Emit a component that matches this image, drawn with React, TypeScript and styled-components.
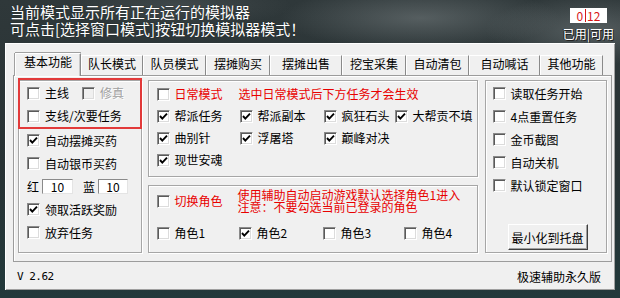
import React from "react";
import styled, { createGlobalStyle } from "styled-components";

const FONT = `"Noto Sans CJK SC", "Noto Sans", sans-serif`;

const GlobalStyle = createGlobalStyle`
  html, body { margin: 0; padding: 0; }
  body { width: 620px; height: 298px; overflow: hidden; background: #2a3335; }
  * { box-sizing: border-box; }
`;

const Window = styled.div`
  width: 620px;
  height: 298px;
  display: flex;
  flex-direction: column;
  font-family: ${FONT};
  background:
    radial-gradient(ellipse 200px 45px at 420px 18px, rgba(118, 126, 128, 0.55), transparent 70%),
    radial-gradient(ellipse 150px 50px at 590px 30px, rgba(112, 120, 122, 0.6), transparent 70%),
    radial-gradient(ellipse 160px 30px at 180px 6px, rgba(80, 88, 90, 0.5), transparent 70%),
    linear-gradient(180deg, #2f383a 0%, #283234 55%, #22393b 100%);
`;

const Header = styled.header`
  height: 43px;
  flex: none;
  display: flex;
  justify-content: space-between;
  align-items: flex-start;
  padding: 3px 6px 0 10px;
`;

const HeaderText = styled.div`
  color: #ffffff;
  font-size: 15px;
  line-height: 17px;
  text-shadow: 0 0 1px rgba(0, 0, 0, 0.6);
  white-space: nowrap;
`;

const Counter = styled.div`
  display: flex;
  flex-direction: column;
  align-items: center;
`;

const CounterBox = styled.div`
  margin-top: 5px;
  width: 37px;
  height: 15px;
  background: #ffffff;
  color: #d81818;
  font-size: 12px;
  line-height: 15px;
  display: flex;
  align-items: center;
  justify-content: center;
`;

const CounterBar = styled.span`
  display: inline-block;
  width: 1px;
  height: 13px;
  margin: 0 1px 0 2px;
  background: #d81818;
`;

const CounterLabel = styled.div`
  margin-top: 4px;
  color: #ffffff;
  font-size: 12px;
  line-height: 13px;
  text-shadow: 1px 1px 0 #222, -1px 0 0 #222;
  white-space: nowrap;
`;

const Panel = styled.main`
  margin: 0 5px;
  height: 247px;
  flex: none;
  background: #f0f0f0;
  padding: 10px 3px 0 8px;
  box-shadow: inset 1px 1px 0 #ffffff, inset -1px -1px 0 #a0a0a0;
  display: flex;
  flex-direction: column;
`;

const TabRow = styled.div`
  height: 22px;
  display: flex;
  align-items: flex-end;
  padding-left: 2px;
`;

const Tab = styled.div<{ $active?: boolean; $w: number }>`
  position: relative;
  z-index: ${(p) => (p.$active ? 1 : 0)};
  width: ${(p) => p.$w}px;
  height: ${(p) => (p.$active ? 23 : 20)}px;
  margin-bottom: ${(p) => (p.$active ? -1 : 0)}px;
  background: #f0f0f0;
  border-top: 1px solid ${(p) => (p.$active ? "#ffffff" : "#ffffff")};
  border-left: 1px solid #ffffff;
  border-right: 1px solid #8a8a8a;
  box-shadow: ${(p) => (p.$active ? "inset -1px 0 0 #c8c8c8, -1px 0 0 #a0a0a0, 0 -1px 0 #a0a0a0" : "none")};
  font-size: 12px;
  line-height: 15px;
  color: #000;
  text-align: center;
  white-space: nowrap;
`;

const Pane = styled.section`
  height: 187px;
  border: 1px solid #9c9c9c;
  box-shadow: inset 1px 1px 0 #ffffff;
  padding: 4px 4px 8px 4px;
  display: flex;
  gap: 6px;
`;

const Group = styled.div<{ $w: number; $h?: number }>`
  width: ${(p) => p.$w}px;
  ${(p) => (p.$h ? `height: ${p.$h}px;` : "flex: 1;")}
  border: 1px solid #a6a6a6;
  box-shadow: inset 1px 1px 0 #ffffff, 1px 1px 0 #ffffff;
  display: flex;
  flex-direction: column;
`;

const LeftGroup = styled(Group)`
  padding-left: 8px;
`;

const MiddleColumn = styled.div`
  width: 330px;
  display: flex;
  flex-direction: column;
  gap: 8px;
`;

const RightGroup = styled(Group)`
  margin-left: 1px;
  padding: 1px 0 0 7px;
`;

const RedBox = styled.div`
  margin: -3px -1px 0 -9px;
  border: 2px solid #e23a3a;
  padding: 2px 0 0 7px;
  display: flex;
  flex-direction: column;
  gap: 1px;
`;

const Row = styled.div<{ $h?: number }>`
  height: ${(p) => p.$h ?? 23}px;
  display: flex;
  align-items: center;
  font-size: 12px;
  color: #000;
  white-space: nowrap;
`;

const TaskGrid = styled.div<{ $cols: string }>`
  display: grid;
  grid-template-columns: ${(p) => p.$cols};
  grid-auto-rows: 22px;
  padding: 2px 0 0 8px;
  align-items: center;
`;

const RoleGrid = styled.div`
  display: grid;
  grid-template-columns: 82px 84px 81px auto;
  grid-template-rows: 24px 22px;
  row-gap: 9px;
  padding: 3px 0 0 8px;
  align-items: center;
`;

const Note = styled.div<{ $span?: string }>`
  grid-column: ${(p) => p.$span ?? "2 / -1"};
  color: #e80000;
  font-size: 12px;
  line-height: 12px;
  margin-left: -1px;
  white-space: nowrap;
`;

const CheckLabel = styled.label<{ $w?: number; $red?: boolean; $disabled?: boolean }>`
  display: flex;
  align-items: center;
  gap: 5px;
  ${(p) => (p.$w ? `width: ${p.$w}px;` : "")}
  font-size: 12px;
  line-height: 14px;
  white-space: nowrap;
  color: ${(p) => (p.$disabled ? "#a0a0a0" : p.$red ? "#e80000" : "#000000")};
  text-shadow: ${(p) => (p.$disabled ? "1px 1px 0 #ffffff" : "none")};
`;

const Box = styled.span<{ $disabled?: boolean }>`
  width: 13px;
  height: 13px;
  flex: none;
  background: ${(p) => (p.$disabled ? "#f0f0f0" : "#ffffff")};
  border: 1px solid;
  border-color: #8a8a8a #ffffff #ffffff #8a8a8a;
  box-shadow: inset 1px 1px 0 #5a5a5a, inset -1px -1px 0 #dcdcdc;
  display: flex;
  align-items: center;
  justify-content: center;
`;

const NumberField = styled.span<{ $w: number }>`
  width: ${(p) => p.$w}px;
  height: 15px;
  background: #ffffff;
  border: 1px solid;
  border-color: #8a8a8a #e4e4e4 #e4e4e4 #8a8a8a;
  font-size: 12px;
  line-height: 13px;
  text-align: center;
  color: #000;
`;

const FieldLabel = styled.span<{ $gap: number }>`
  margin-left: ${(p) => p.$gap}px;
  margin-right: 3px;
`;

const TrayButton = styled.button`
  width: 80px;
  height: 26px;
  margin: auto 0 2px 15px;
  padding: 0;
  background: #f0f0f0;
  border: 1px solid;
  border-color: #ffffff #404040 #404040 #ffffff;
  box-shadow: inset -1px -1px 0 #a0a0a0;
  font-family: ${FONT};
  font-size: 12px;
  color: #000;
`;

const Footer = styled.footer`
  height: 28px;
  display: flex;
  align-items: center;
  justify-content: space-between;
  padding: 0 11px 0 4px;
  font-size: 12px;
  color: #000;
`;

const Version = styled.span`
  font-family: "DejaVu Sans Mono", "Liberation Mono", monospace;
  font-size: 11px;
  letter-spacing: -0.5px;
`;

function Check({
  label,
  checked,
  red,
  disabled,
  w,
}: {
  label: string;
  checked?: boolean;
  red?: boolean;
  disabled?: boolean;
  w?: number;
}) {
  return (
    <CheckLabel $w={w} $red={red} $disabled={disabled}>
      <Box $disabled={disabled}>
        {checked && (
          <svg width="9" height="9" viewBox="0 0 9 9">
            <polyline points="1,4 3.3,6.6 8,1.6" fill="none" stroke="#000" strokeWidth="1.9" />
          </svg>
        )}
      </Box>
      {label}
    </CheckLabel>
  );
}

const tabs: { name: string; w: number }[] = [
  { name: "基本功能", w: 66 },
  { name: "队长模式", w: 62 },
  { name: "队员模式", w: 63 },
  { name: "摆摊购买", w: 64 },
  { name: "摆摊出售", w: 72 },
  { name: "挖宝采集", w: 64 },
  { name: "自动清包", w: 63 },
  { name: "自动喊话", w: 71 },
  { name: "其他功能", w: 63 },
];

export default function App() {
  return (
    <Window>
      <GlobalStyle />
      <Header>
        <HeaderText>
          <div>当前模式显示所有正在运行的模拟器</div>
          <div>可点击[选择窗口模式]按钮切换模拟器模式！</div>
        </HeaderText>
        <Counter>
          <CounterBox>
            0<CounterBar />12
          </CounterBox>
          <CounterLabel>已用|可用</CounterLabel>
        </Counter>
      </Header>
      <Panel>
        <TabRow>
          {tabs.map((t, i) => (
            <Tab key={t.name} $w={t.w} $active={i === 0}>
              {t.name}
            </Tab>
          ))}
        </TabRow>
        <Pane>
          <LeftGroup $w={119}>
            <RedBox>
              <Row $h={22}>
                <Check label="主线" w={55} />
                <Check label="修真" disabled />
              </Row>
              <Row $h={22}>
                <Check label="支线/次要任务" />
              </Row>
            </RedBox>
            <Row>
              <Check label="自动摆摊买药" checked />
            </Row>
            <Row>
              <Check label="自动银币买药" />
            </Row>
            <Row>
              <FieldLabel $gap={0}>红</FieldLabel>
              <NumberField $w={31}>10</NumberField>
              <FieldLabel $gap={10}>蓝</FieldLabel>
              <NumberField $w={30}>10</NumberField>
            </Row>
            <Row>
              <Check label="领取活跃奖励" checked />
            </Row>
            <Row>
              <Check label="放弃任务" />
            </Row>
          </LeftGroup>
          <MiddleColumn>
            <Group $w={330} $h={97}>
              <TaskGrid $cols="83px 84px 71px auto">
                <Check label="日常模式" red />
                <Note>选中日常模式后下方任务才会生效</Note>
                <Check label="帮派任务" checked />
                <Check label="帮派副本" checked />
                <Check label="疯狂石头" checked />
                <Check label="大帮贡不填" checked />
                <Check label="曲别针" checked />
                <Check label="浮屠塔" checked />
                <Check label="巅峰对决" checked />
                <span />
                <Check label="现世安魂" checked />
              </TaskGrid>
            </Group>
            <Group $w={330}>
              <RoleGrid>
                <Check label="切换角色" red />
                <Note>
                  使用辅助自动启动游戏默认选择角色1进入
                  <br />
                  注意：不要勾选当前已登录的角色
                </Note>
                <Check label="角色1" />
                <Check label="角色2" checked />
                <Check label="角色3" />
                <Check label="角色4" />
              </RoleGrid>
            </Group>
          </MiddleColumn>
          <RightGroup $w={127}>
            <Row>
              <Check label="读取任务开始" />
            </Row>
            <Row>
              <Check label="4点重置任务" />
            </Row>
            <Row>
              <Check label="金币截图" />
            </Row>
            <Row>
              <Check label="自动关机" />
            </Row>
            <Row>
              <Check label="默认锁定窗口" />
            </Row>
            <TrayButton>最小化到托盘</TrayButton>
          </RightGroup>
        </Pane>
        <Footer>
          <Version>V 2.62</Version>
          <span>极速辅助永久版</span>
        </Footer>
      </Panel>
    </Window>
  );
}
